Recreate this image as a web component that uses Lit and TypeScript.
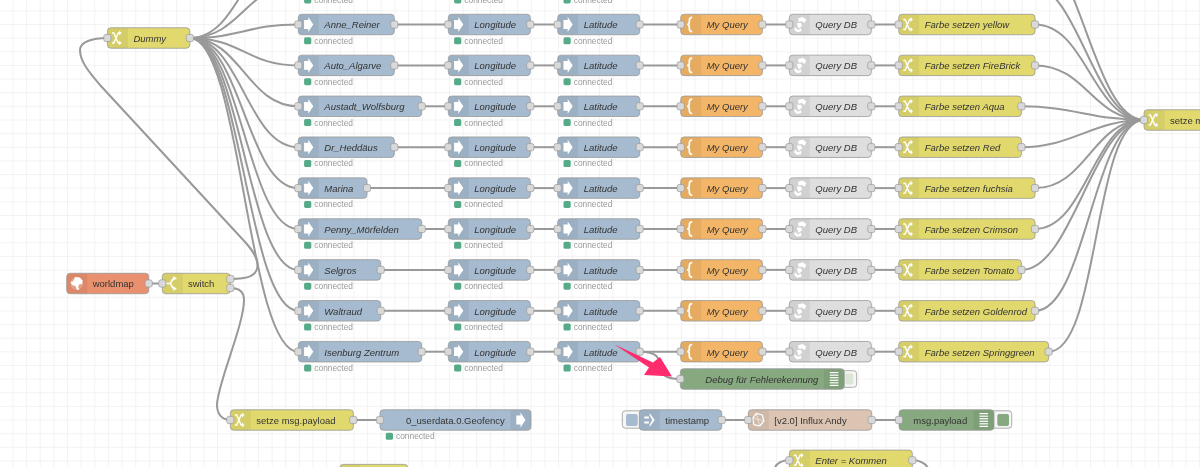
import { LitElement, html, svg, css } from "lit";
import { customElement } from "lit/decorators.js";

const H = 20.5; // node height
const ICON_W = 20.5;
const CURVE = 51.2; // 75 flow-units of bezier handle at the canvas zoom
const NODE_W = 68.2;

const COLORS: Record<string, string> = {
  yellow: "#e2d96e",
  blue: "#a6bbcf",
  orange: "#f3b567",
  gray: "#dedede",
  green: "#87a980",
  salmon: "#e9906f",
  brown: "#dcc4b2",
};

type IconName = "swap" | "bridge" | "brace" | "db" | "globe" | "switch" | "inject" | "influx" | "debug";

interface FlowNode {
  x: number;
  cy: number;
  r: number;
  color: string;
  icon: IconName;
  label: string;
  italic?: boolean;
  iconRight?: boolean;
  labelX?: number;
  input?: boolean;
  outputs?: number;
  status?: boolean;
}

const rowY = (k: number) => 24.5 + 40.9 * k;

const ROWS: { name: string; nameR: number; farbe: string; farbeR: number }[] = [
  { name: "Anne_Reiner", nameR: 394.3, farbe: "Farbe setzen yellow", farbeR: 1035 },
  { name: "Auto_Algarve", nameR: 394.3, farbe: "Farbe setzen FireBrick", farbeR: 1035 },
  { name: "Austadt_Wolfsburg", nameR: 421.7, farbe: "Farbe setzen Aqua", farbeR: 1021.4 },
  { name: "Dr_Heddäus", nameR: 394.3, farbe: "Farbe setzen Red", farbeR: 1021.4 },
  { name: "Marina", nameR: 367, farbe: "Farbe setzen fuchsia", farbeR: 1035 },
  { name: "Penny_Mörfelden", nameR: 421.7, farbe: "Farbe setzen Crimson", farbeR: 1035 },
  { name: "Selgros", nameR: 380.7, farbe: "Farbe setzen Tomato", farbeR: 1021.4 },
  { name: "Waltraud", nameR: 380.7, farbe: "Farbe setzen Goldenrod", farbeR: 1035 },
  { name: "Isenburg Zentrum", nameR: 421.7, farbe: "Farbe setzen Springgreen", farbeR: 1048.6 },
];

const SETZE_IN = { x: 1144, y: 120 };
const DUMMY_OUT = { x: 189.8, y: 38 };

function buildNodes(): FlowNode[] {
  const nodes: FlowNode[] = [];
  ROWS.forEach((row, k) => {
    const cy = rowY(k);
    nodes.push(
      { x: 298.3, cy, r: row.nameR, color: "blue", icon: "bridge", label: row.name, italic: true, status: true, input: true, outputs: 1 },
      { x: 448.3, cy, r: 530.3, color: "blue", icon: "bridge", label: "Longitude", italic: true, status: true, input: true, outputs: 1 },
      { x: 557.7, cy, r: 639.7, color: "blue", icon: "bridge", label: "Latitude", italic: true, status: true, input: true, outputs: 1 },
      { x: 680.7, cy, r: 762.4, color: "orange", icon: "brace", label: "My Query", italic: true, input: true, outputs: 1 },
      { x: 789.3, cy, r: 871.3, color: "gray", icon: "db", label: "Query DB", italic: true, input: true, outputs: 1 },
      { x: 898.7, cy, r: row.farbeR, color: "yellow", icon: "swap", label: row.farbe, italic: true, input: true, outputs: 1 }
    );
  });
  nodes.push(
    { x: 107.4, cy: 38, r: 189.8, color: "yellow", icon: "swap", label: "Dummy", italic: true, input: true, outputs: 1 },
    { x: 1144, cy: 120, r: 1267, color: "yellow", icon: "swap", label: "setze msg.payload", input: true },
    { x: 66.7, cy: 283.5, r: 148.7, color: "salmon", icon: "globe", label: "worldmap", outputs: 1 },
    { x: 162.3, cy: 283.5, r: 230.3, color: "yellow", icon: "switch", label: "switch", labelX: 188, input: true },
    { x: 230.3, cy: 420, r: 353.3, color: "yellow", icon: "swap", label: "setze msg.payload", input: true, outputs: 1 },
    { x: 380, cy: 420, r: 531, color: "blue", icon: "bridge", iconRight: true, label: "0_userdata.0.Geofency", labelX: 406, input: true, status: true },
    { x: 680.3, cy: 379, r: 844.3, color: "green", icon: "debug", iconRight: true, label: "Debug für Fehlerekennung", labelX: 705.3, italic: true, input: true },
    { x: 639.3, cy: 420, r: 721.7, color: "blue", icon: "inject", label: "timestamp", outputs: 1 },
    { x: 748.3, cy: 420, r: 871.7, color: "brown", icon: "influx", label: "[v2.0] Influx Andy", input: true, outputs: 1 },
    { x: 899, cy: 420, r: 994, color: "green", icon: "debug", iconRight: true, label: "msg.payload", labelX: 913.3, input: true },
    { x: 789.3, cy: 460.3, r: 912.3, color: "yellow", icon: "swap", label: "Enter = Kommen", italic: true, input: true, outputs: 1 },
    { x: 340, cy: 474.6, r: 407.8, color: "yellow", icon: "swap", label: "" }
  );
  return nodes;
}

function wire(x1: number, y1: number, x2: number, y2: number): string {
  const delta = Math.hypot(x2 - x1, y2 - y1);
  const h = delta < NODE_W ? CURVE * (1 - (NODE_W - delta) / NODE_W) : CURVE;
  return `M${x1} ${y1}C${x1 + h} ${y1} ${x2 - h} ${y2} ${x2} ${y2}`;
}

function buildWires(): string[] {
  const wires: string[] = [];
  ROWS.forEach((row, k) => {
    const y = rowY(k);
    wires.push(wire(DUMMY_OUT.x, DUMMY_OUT.y, 298.3, y));
    wires.push(wire(row.nameR, y, 448.3, y));
    wires.push(wire(530.3, y, 557.7, y));
    wires.push(wire(639.7, y, 680.7, y));
    wires.push(wire(762.4, y, 789.3, y));
    wires.push(wire(871.3, y, 898.7, y));
    wires.push(wire(row.farbeR, y, SETZE_IN.x, SETZE_IN.y));
  });
  // rows scrolled above the top edge of the canvas
  [-1, -2].forEach((k) => {
    const y = rowY(k);
    wires.push(wire(DUMMY_OUT.x, DUMMY_OUT.y, 298.3, y));
    wires.push(wire(1028, y, SETZE_IN.x, SETZE_IN.y));
  });
  wires.push(wire(639.7, rowY(8), 680.3, 379));
  wires.push(wire(148.7, 283.5, 162.3, 283.5));
  wires.push(wire(353.3, 420, 380, 420));
  wires.push(wire(721.7, 420, 748.3, 420));
  wires.push(wire(871.7, 420, 899, 420));
  // switch output 1 looping back to Dummy
  wires.push("M230.3 279C248 279 257.5 276 257.5 265C257.5 257 252 250 246 243L100 85C90 73 80 62 80 50C80 42 92 38 107.4 38");
  // switch output 2 to setze msg.payload
  wires.push("M230.3 288C240 288 244 292 244 300C244 325 217 385 217 405C217 414 222 420 230.3 420");
  // Enter = Kommen stubs running off the bottom edge
  wires.push("M789.3 460.3C782 460.3 776 463 774 470");
  wires.push("M912.3 460.3C920 460.3 926 463 929 470");
  return wires;
}

function icon(name: IconName, x: number, cy: number) {
  const t = `translate(${x} ${cy})`;
  switch (name) {
    case "swap":
      return svg`<g transform=${t}>
        <path class="ico-line thin" d="M4.6 -5H6.4L10.8 5H12.4M4.6 5H6.4L10.8 -5H12.4"/>
        <path class="ico-fill" d="M11.8 -7.6L14.2 -5L11.8 -2.4ZM11.8 2.4L14.2 5L11.8 7.6Z"/>
      </g>`;
    case "bridge":
      return svg`<g transform=${t}>
        <path class="ico-fill" d="M5.8 -4.4H10V-7.4L15 0L10 7.4V4.4H5.8Z"/>
      </g>`;
    case "brace":
      return svg`<g transform=${t}>
        <path class="ico-line" d="M11.5 -7.2C9 -7.2 8.6 -6 8.6 -4V-2.2C8.6 -0.8 8 0 6.4 0C8 0 8.6 0.8 8.6 2.2V4C8.6 6 9 7.2 11.5 7.2"/>
      </g>`;
    case "db":
      return svg`<g transform=${t}>
        <path class="ico-fill" d="M8.6 -6.2L13.4 -7.6L17 -5L15.4 -1.4L12.6 -3.2L9.4 -2.6Z"/>
        <path class="ico-fill" d="M7.6 -1.6L11.8 -1.6L12.8 1.4L9 4Z"/>
        <path class="ico-fill" d="M5.6 2.4L8.8 5.4L11.6 3.6L12.2 6.8L7.8 7.8L5 5.4Z"/>
      </g>`;
    case "globe":
      return svg`<g transform=${t}>
        <circle class="ico-fill" cx="10" cy="0" r="6.4" opacity="0.22"/>
        <path class="ico-fill" d="M8.4 -6.4L13 -6L16 -3L15.4 0.6L12.6 0.8L11.4 3.4L12.6 6L10.4 6.6L8.8 2.6L5.4 1.4L3.8 -1.4L6.4 -2.2Z"/>
      </g>`;
    case "switch":
      return svg`<g transform=${t}>
        <path class="ico-line" d="M4 0H7.6C9.4 0 9.2 -4.4 11.4 -5M7.6 0C9.4 0 9.2 4.4 11.4 5"/>
        <path class="ico-fill" d="M11 -7.6L14.6 -5.2L11 -2.8ZM11 2.8L14.6 5.2L11 7.6Z"/>
      </g>`;
    case "inject":
      return svg`<g transform=${t}>
        <path class="ico-fill" d="M5 -3.4H9.6V-1.6H5ZM5 1.6H9.6V3.4H5ZM10.6 -6.6L15.4 0L10.6 6.6L10 5.2L13 0L10 -5.2Z"/>
      </g>`;
    case "influx":
      return svg`<g transform=${t}>
        <path class="ico-stroke" d="M8 -6.6L14 -5L15.6 1L11.4 6L5.6 4.6L4.4 -1.6Z"/>
        <path class="ico-stroke-thin" d="M8 -6.6L9.6 -0.8L15.6 1M9.6 -0.8L4.4 -1.6M9.6 -0.8L11.4 6"/>
      </g>`;
    case "debug":
      return svg`<g transform=${t}>
        ${[-6.4, -3.8, -1.3, 1.3, 3.8, 6.4].map((dy) => svg`<rect class="ico-fill" x="6" y=${dy - 0.6} width="8.6" height="1.2"/>`)}
      </g>`;
  }
}

function port(x: number, y: number) {
  return svg`<rect class="port" x=${x - 3.6} y=${y - 3.6} width="7.2" height="7.2" rx="2"/>`;
}

function renderNode(n: FlowNode) {
  const top = n.cy - H / 2;
  const width = n.r - n.x;
  const iconX = n.iconRight ? n.r - ICON_W : n.x;
  const labelX = n.labelX ?? n.x + 26;
  const id = `${Math.round(n.x)}-${Math.round(n.cy)}`;
  return svg`<g>
    <clipPath id=${`c${id}`}><rect x=${n.x} y=${top} width=${width} height=${H} rx="3.4"/></clipPath>
    <rect x=${n.x} y=${top} width=${width} height=${H} rx="3.4" fill=${COLORS[n.color]}/>
    <rect class="icon-shade" x=${iconX} y=${top} width=${ICON_W} height=${H} clip-path=${`url(#c${id})`}/>
    <rect class="node-edge" x=${n.x} y=${top} width=${width} height=${H} rx="3.4"/>
    ${icon(n.icon, iconX, n.cy)}
    ${n.label ? svg`<text class=${n.italic ? "label italic" : "label"} x=${labelX} y=${n.cy + 3.9}>${n.label}</text>` : null}
    ${n.input ? port(n.x, n.cy) : null}
    ${n.outputs ? port(n.r, n.cy) : null}
    ${n.status ? svg`
      <rect class="status-dot" x=${n.x + 5.8} y=${n.cy + 12.8} width="7.2" height="7" rx="1.6"/>
      <text class="status" x=${n.x + 16} y=${n.cy + 19.2}>connected</text>` : null}
  </g>`;
}

@customElement("app-root")
export class AppRoot extends LitElement {
  static styles = css`
    :host {
      display: block;
      width: 1200px;
      height: 467px;
      overflow: hidden;
      background: #fff;
    }
    svg.canvas {
      display: block;
      width: 1200px;
      height: 467px;
      font-family: "Liberation Sans", Arial, sans-serif;
      filter: blur(0.25px);
    }
    .grid {
      stroke: #eee;
      stroke-width: 0.7;
    }
    .wire {
      fill: none;
      stroke: #999;
      stroke-width: 2;
    }
    .node-edge {
      fill: none;
      stroke: #999;
      stroke-width: 0.8;
    }
    .icon-shade {
      fill: rgba(0, 0, 0, 0.055);
    }
    .ico-fill {
      fill: #fff;
    }
    .ico-line {
      fill: none;
      stroke: #fff;
      stroke-width: 1.7;
    }
    .ico-line.thin {
      stroke-width: 1.4;
    }
    .ico-stroke {
      fill: none;
      stroke: #fff;
      stroke-width: 1.2;
      stroke-linejoin: round;
    }
    .ico-stroke-thin {
      fill: none;
      stroke: #fff;
      stroke-width: 0.7;
      opacity: 0.8;
    }
    .port {
      fill: #d9d9d9;
      stroke: #999;
      stroke-width: 0.7;
    }
    .label {
      font-size: 9.5px;
      fill: #333;
    }
    .italic {
      font-style: italic;
    }
    .status {
      font-size: 8.4px;
      fill: #999;
    }
    .status-dot {
      fill: #55aa88;
    }
    .button-box {
      fill: #eee;
      fill-opacity: 0.55;
      stroke: #999;
      stroke-width: 0.8;
    }
    .debug-off {
      fill: #dbe6d8;
    }
    .debug-on {
      fill: #87a980;
    }
    .inject-btn {
      fill: #a6bbcf;
    }
    .pointer {
      fill: #ff2b6d;
    }
  `;

  private renderGrid() {
    const lines = [];
    for (let i = 0; i <= 88; i++) {
      const x = -0.7 + i * 13.64;
      lines.push(svg`<line class="grid" x1=${x} y1="0" x2=${x} y2="467"/>`);
    }
    for (let i = 0; i <= 35; i++) {
      const y = -2.78 + i * 13.64;
      lines.push(svg`<line class="grid" x1="0" y1=${y} x2="1200" y2=${y}/>`);
    }
    return lines;
  }

  render() {
    const nodes = buildNodes();
    const wires = buildWires();
    return html`
      <svg class="canvas" viewBox="0 0 1200 467" xmlns="http://www.w3.org/2000/svg">
        ${this.renderGrid()}
        ${wires.map((d) => svg`<path class="wire" d=${d}/>`)}

        <!-- node buttons sit behind their nodes -->
        <rect class="button-box" x="622.3" y="410.8" width="22" height="17.4" rx="3"/>
        <rect class="inject-btn" x="626" y="414" width="11.7" height="12" rx="2"/>
        <rect class="button-box" x="838" y="370.7" width="18.7" height="16.6" rx="3"/>
        <rect class="button-box" x="988" y="410.8" width="23.7" height="17.4" rx="3"/>

        ${nodes.map(renderNode)}

        <rect class="debug-off" x="845.3" y="373.4" width="8" height="11" rx="1.6"/>
        <rect class="debug-on" x="997.3" y="414" width="11.7" height="12" rx="2"/>

        ${port(230.3, 279)} ${port(230.3, 288)}

        ${[298.3, 448.3, 557.7].map(
          (x) => svg`
            <rect class="status-dot" x=${x + 5.8} y="-3.6" width="7.2" height="7" rx="1.6"/>
            <text class="status" x=${x + 16} y="2.8">connected</text>`
        )}

        <polygon class="pointer" points="614.5,344.5 653,362.5 660,357 672,376.5 644,375 649,367.5"/>
      </svg>
    `;
  }
}
